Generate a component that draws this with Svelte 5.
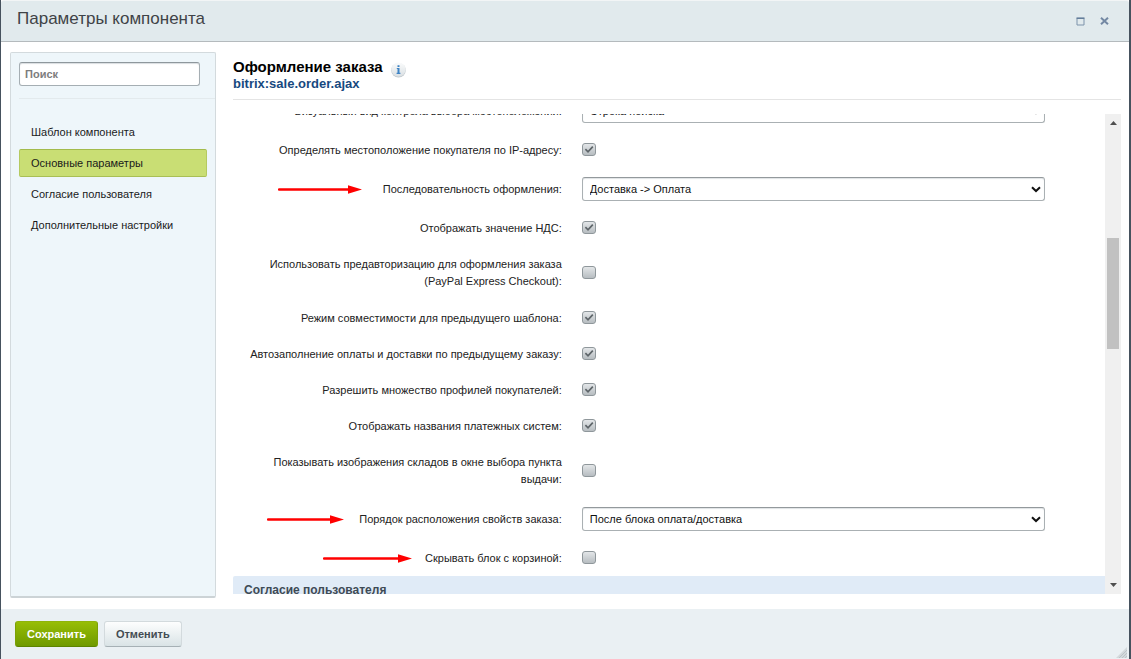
<script lang="ts">
  type Row = {
    id: string;
    label: string;
    kind: 'check' | 'select';
    tall?: boolean;
    checked?: boolean;
    options?: string[];
    arrow?: { length: number; gap: number };
  };

  const sections = [
    'Шаблон компонента',
    'Основные параметры',
    'Согласие пользователя',
    'Дополнительные настройки',
  ];

  const rows: Row[] = $state([
    { id: 'loc', label: 'Визуальный вид контрола выбора местоположений:', kind: 'select', options: ['Строка поиска'] },
    { id: 'ip', label: 'Определять местоположение покупателя по IP-адресу:', kind: 'check', checked: true },
    { id: 'seq', label: 'Последовательность оформления:', kind: 'select', options: ['Доставка -> Оплата', 'Оплата -> Доставка'], arrow: { length: 84, gap: 21 } },
    { id: 'vat', label: 'Отображать значение НДС:', kind: 'check', checked: true },
    { id: 'preauth', label: 'Использовать предавторизацию для оформления заказа (PayPal Express Checkout):', kind: 'check', tall: true, checked: false },
    { id: 'compat', label: 'Режим совместимости для предыдущего шаблона:', kind: 'check', checked: true },
    { id: 'autofill', label: 'Автозаполнение оплаты и доставки по предыдущему заказу:', kind: 'check', checked: true },
    { id: 'profiles', label: 'Разрешить множество профилей покупателей:', kind: 'check', checked: true },
    { id: 'paynames', label: 'Отображать названия платежных систем:', kind: 'check', checked: true },
    { id: 'stores', label: 'Показывать изображения складов в окне выбора пункта выдачи:', kind: 'check', tall: true, checked: false },
    { id: 'props', label: 'Порядок расположения свойств заказа:', kind: 'select', options: ['После блока оплата/доставка'], arrow: { length: 77, gap: 15 } },
    { id: 'basket', label: 'Скрывать блок с корзиной:', kind: 'check', checked: false, arrow: { length: 89, gap: 13 } },
  ]);

  let current = $state(1);
</script>

<div class="dialog">
  <header class="head">
    <h1>Параметры компонента</h1>
    <button class="win" aria-label="Развернуть">
      <svg width="9" height="9" viewBox="0 0 9 9">
        <path d="M1 1.5V8H8V1.5" fill="none" stroke="#7d93ab" />
        <path d="M.5 1.2H8.5" stroke="#647e9b" stroke-width="1.6" />
      </svg>
    </button>
    <button class="win" aria-label="Закрыть">
      <svg width="9" height="8" viewBox="0 0 9 8">
        <path d="M1 .8L8 7.2M8 .8L1 7.2" stroke="#7388a3" stroke-width="2" />
      </svg>
    </button>
  </header>

  <div class="body">
    <aside>
      <div class="search">
        <input type="text" placeholder="Поиск" aria-label="Поиск" />
      </div>
      <nav>
        {#each sections as name, i}
          <a href="#s{i}" class:active={i === current} onclick={() => (current = i)}>{name}</a>
        {/each}
      </nav>
    </aside>

    <main>
      <div class="title">
        <h2>
          Оформление заказа
          <svg width="17" height="17" viewBox="0 0 17 17">
            <defs>
              <linearGradient id="info" x1="0" y1="0" x2="0" y2="1">
                <stop offset="0" stop-color="#fbfcfc" />
                <stop offset="1" stop-color="#d9dfe3" />
              </linearGradient>
            </defs>
            <circle cx="8.5" cy="9.4" r="7.2" fill="#bcc4c9" />
            <circle cx="8.5" cy="8.6" r="7.2" fill="url(#info)" />
            <path d="M7.5 4.2h2v1.8h-2zM6.8 7h2.7v4.8h.9v1.2H6.6v-1.2h.9V8.1h-.7z" fill="#3e83c4" />
          </svg>
        </h2>
        <p>bitrix:sale.order.ajax</p>
      </div>

      <div class="scroller">
        <div class="view">
          <div class="form">
            {#each rows as row (row.id)}
              <div class="row" class:sel={row.kind === 'select'} class:tall={row.tall}>
                <div class="name">
                  {#if row.arrow}
                    <svg
                      class="arrow"
                      width={row.arrow.length + row.arrow.gap}
                      height="9"
                      aria-hidden="true"
                    >
                      <path d="M1 4.5H{row.arrow.length - 12}" stroke="#f00" stroke-width="2.4" stroke-linecap="round" />
                      <path d="M{row.arrow.length - 14} .3L{row.arrow.length} 4.5L{row.arrow.length - 14} 8.7Z" fill="#f00" />
                    </svg>
                  {/if}
                  <label for={row.id}>{row.label}</label>
                </div>
                <div class="field">
                  {#if row.kind === 'select'}
                    <select id={row.id}>
                      {#each row.options ?? [] as option}
                        <option>{option}</option>
                      {/each}
                    </select>
                    <svg class="chev" width="10" height="7" viewBox="0 0 10 7">
                      <path d="M1 1.2L5 5L9 1.2" fill="none" stroke="#111" stroke-width="2" />
                    </svg>
                  {:else}
                    <span class="check">
                      <input type="checkbox" id={row.id} bind:checked={row.checked} />
                      {#if row.checked}
                        <svg width="14" height="13" viewBox="0 0 14 13">
                          <path d="M3.4 6.2L6 8.8L10.8 3.6" fill="none" stroke="#5e6569" stroke-width="1.7" />
                        </svg>
                      {/if}
                    </span>
                  {/if}
                </div>
              </div>
            {/each}
            <h3>Согласие пользователя</h3>
          </div>
        </div>
        <div class="bar">
          <svg width="7" height="4"><path d="M0 4L3.5 0L7 4Z" fill="#505050" /></svg>
          <div class="track"><div class="thumb"></div></div>
          <svg width="7" height="4"><path d="M0 0L3.5 4L7 0Z" fill="#505050" /></svg>
        </div>
      </div>
    </main>
  </div>

  <footer>
    <button class="btn save">Сохранить</button>
    <button class="btn">Отменить</button>
    <svg class="grip" width="11" height="11" viewBox="0 0 11 11">
      <path d="M0 11L11 0V11Z" fill="#d3d9dc" />
      <path d="M3 11L11 3M6 11L11 6M9 11L11 9" stroke="#bcc4c8" />
    </svg>
  </footer>
</div>

<style>
  :global(body) {
    margin: 0;
    background: #fff;
  }
  .dialog {
    box-sizing: border-box;
    display: flex;
    flex-direction: column;
    min-height: 100vh;
    border: solid #46525e;
    border-width: 0 2px 0 1px;
    font: 11px/17px 'Liberation Sans', Arial, sans-serif;
    color: #222;
  }
  h1, h2, h3, p {
    margin: 0;
  }
  button {
    font-family: inherit;
    cursor: pointer;
  }

  .head {
    display: flex;
    align-items: center;
    gap: 8px;
    box-sizing: border-box;
    height: 42px;
    padding: 0 17px 0 16px;
    background: #e1eaed;
    border-top: 1px solid #f2f5f6;
    border-bottom: 1px solid #b4babd;
    border-radius: 3px 3px 0 0;
  }
  h1 {
    flex: 1;
    padding-bottom: 4px;
    font-size: 17px;
    line-height: 20px;
    font-weight: 400;
    color: #3f4347;
  }
  .win {
    display: flex;
    align-items: center;
    justify-content: center;
    width: 16px;
    height: 16px;
    padding: 0;
    border: 0;
    background: none;
  }

  .body {
    flex: 1;
    display: flex;
    gap: 17px;
    padding: 10px 8px 11px 9px;
    background: #fff;
  }
  aside {
    flex: 0 0 204px;
    background: #eef6fa;
    border: 1px solid #d3dadd;
    border-bottom: 2px solid #ccd3d6;
    border-radius: 2px;
  }
  .search {
    margin-left: 8px;
    padding: 9px 15px 12px 0;
    border-bottom: 1px solid #e3eaed;
  }
  .search input {
    box-sizing: border-box;
    display: block;
    width: 100%;
    height: 24px;
    padding: 0 5px;
    border: 1px solid #a5aeb3;
    border-top-color: #8e979c;
    border-radius: 3px;
    background: #fff;
    box-shadow: inset 0 1px 1px #d9dde0;
    font: bold 11px 'Liberation Sans', Arial, sans-serif;
  }
  .search input::placeholder {
    color: #7d7d7d;
  }
  nav {
    display: flex;
    flex-direction: column;
    gap: 3px;
    padding: 19px 8px 0;
  }
  nav a {
    box-sizing: border-box;
    height: 28px;
    padding: 0 11px;
    border: 1px solid transparent;
    border-radius: 2px;
    line-height: 26px;
    color: #1a1a1a;
    text-decoration: none;
  }
  nav a.active {
    background: #c9de74;
    border-color: #a3bb4c #b5ca60 #a9bf55;
  }

  main {
    flex: 1;
    min-width: 0;
    display: flex;
    flex-direction: column;
  }
  .title {
    padding: 6px 0 7px;
    border-bottom: 1px solid #e4e4e4;
  }
  h2 {
    display: flex;
    align-items: center;
    gap: 7px;
    height: 18px;
    font-size: 15px;
    line-height: 18px;
    color: #000;
  }
  h2 svg {
    margin-top: 4px;
  }
  .title p {
    font-size: 13px;
    line-height: 16px;
    font-weight: 700;
    color: #17497f;
  }

  .scroller {
    flex: 1;
    display: flex;
    margin: 14px 0 4px;
    overflow: hidden;
  }
  .view {
    flex: 1;
    height: 480px;
    overflow: hidden;
  }
  /* the list is shown scrolled past its first field */
  .form {
    margin-top: -24px;
  }
  .row {
    display: flex;
    align-items: center;
    height: 36px;
  }
  .row.sel {
    height: 42px;
  }
  .row.tall {
    height: 54px;
  }
  .name {
    box-sizing: border-box;
    flex: 0 0 40%;
    display: flex;
    align-items: center;
    justify-content: flex-end;
    padding-left: 12px;
    padding-right: 20px;
    text-align: right;
  }
  .arrow {
    flex: none;
  }
  .field {
    flex: 1;
    position: relative;
    margin-right: 60px;
  }
  select {
    appearance: none;
    box-sizing: border-box;
    display: block;
    width: 100%;
    height: 24px;
    padding: 0 24px 0 7px;
    border: 1px solid #aab0b3;
    border-top-color: #93999c;
    border-radius: 3px;
    background: #fff;
    box-shadow: inset 0 1px 1px #dfe3e5;
    font: 11px 'Liberation Sans', Arial, sans-serif;
    color: #111;
  }
  .chev {
    position: absolute;
    right: 4px;
    top: 9px;
    pointer-events: none;
  }
  .check {
    position: relative;
    display: block;
    width: 14px;
    height: 14px;
  }
  .check input {
    appearance: none;
    box-sizing: border-box;
    display: block;
    width: 14px;
    height: 13px;
    margin: 0;
    border: 1px solid #8f979b;
    border-radius: 3px;
    background: linear-gradient(#e3e6e8, #b7bdc1);
  }
  .check svg {
    position: absolute;
    inset: 0;
    pointer-events: none;
  }
  h3 {
    height: 28px;
    padding-left: 11px;
    background: #e0ebf7;
    border-radius: 2px 0 0 0;
    font-size: 12px;
    line-height: 28px;
    color: #3e4a55;
  }

  .bar {
    flex: 0 0 16px;
    display: flex;
    flex-direction: column;
    align-items: center;
    padding: 7px 0;
    background: #f0f0f0;
  }
  .track {
    flex: 1;
    width: 12px;
    padding-top: 113px;
  }
  .thumb {
    height: 111px;
    background: #c1c1c1;
  }

  footer {
    position: relative;
    display: flex;
    align-items: center;
    gap: 6px;
    box-sizing: border-box;
    height: 50px;
    padding: 0 14px;
    background: #eaf0f3;
  }
  .btn {
    height: 26px;
    padding: 0 11px;
    border: 1px solid #d3dadd;
    border-bottom-color: #a6b0b5;
    border-radius: 3px;
    background: linear-gradient(#fdfefe, #d9e3e6);
    font-size: 11px;
    font-weight: 700;
    color: #444c53;
  }
  .btn.save {
    border-color: #8fb40a #7ca005 #5c8400;
    background: linear-gradient(#97bd05, #6f9a00);
    color: #fff;
  }
  .grip {
    position: absolute;
    right: 2px;
    bottom: 1px;
  }
</style>
